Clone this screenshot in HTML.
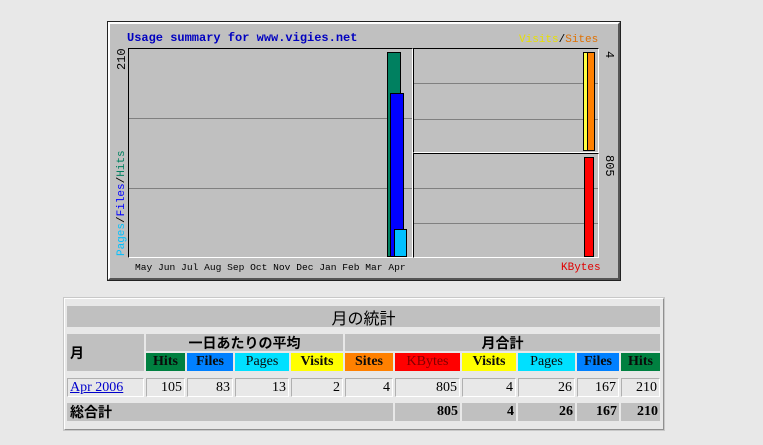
<!DOCTYPE html>
<html><head><meta charset="utf-8"><style>
body{margin:0;width:763px;height:445px;background:#e8e8e8;position:relative;overflow:hidden;font-family:"Liberation Serif","Noto Serif CJK JP",serif}
.a{position:absolute;box-sizing:border-box}
.m{font-family:"Liberation Mono","DejaVu Sans Mono",monospace;font-size:11px}
.c{position:absolute;box-sizing:border-box;font-size:14px;display:flex;align-items:center}
.h{background:#c0c0c0;font-weight:bold}
.d{background:#e8e8e8;border:1px solid #b0b0b0;border-right-color:#fff;border-bottom-color:#fff;justify-content:flex-end;padding-right:2px}
.ch{justify-content:center;font-weight:bold;color:#0a0a0a}
</style></head><body>
<div class="a" style="left:108px;top:22px;width:512px;height:258px;background:#c0c0c0;border:2px solid;border-color:#fff #555 #555 #fff;box-shadow:0 0 0 1px #222"></div>
<div class="a m" style="left:127px;top:31px;color:#0000c0;font-weight:bold;font-size:12px">Usage summary for www.vigies.net</div>
<div class="a m" style="left:519px;top:34px;font-size:11px"><span style="color:#e8e000">Visits</span>/<span style="color:#e07000">Sites</span></div>
<div class="a" style="left:128px;top:48px;width:285px;height:210px;border:1px solid;border-color:#000 #fff #fff #000"></div>
<div class="a" style="left:129px;top:118px;width:283px;height:1px;background:#808080"></div>
<div class="a" style="left:129px;top:188px;width:283px;height:1px;background:#808080"></div>
<div class="a" style="left:387px;top:52px;width:14px;height:205px;background:#008060;border:1px solid #000"></div>
<div class="a" style="left:390px;top:93px;width:14px;height:164px;background:#0000ff;border:1px solid #000"></div>
<div class="a" style="left:394px;top:229px;width:13px;height:28px;background:#00c0ff;border:1px solid #000"></div>
<div class="a" style="left:413px;top:48px;width:186px;height:105px;border:1px solid;border-color:#000 #fff #fff #000"></div>
<div class="a" style="left:413px;top:153px;width:186px;height:105px;border:1px solid;border-color:#000 #fff #fff #000"></div>
<div class="a" style="left:414px;top:83px;width:184px;height:1px;background:#808080"></div>
<div class="a" style="left:414px;top:119px;width:184px;height:1px;background:#808080"></div>
<div class="a" style="left:414px;top:188px;width:184px;height:1px;background:#808080"></div>
<div class="a" style="left:414px;top:223px;width:184px;height:1px;background:#808080"></div>
<div class="a" style="left:583px;top:52px;width:5px;height:99px;background:#ffff40;border:1px solid #000"></div>
<div class="a" style="left:587px;top:52px;width:8px;height:99px;background:#ff8000;border:1px solid #000"></div>
<div class="a" style="left:584px;top:157px;width:10px;height:100px;background:#ff0000;border:1px solid #000"></div>
<div class="a m" style="left:116px;top:70px;transform:rotate(-90deg);transform-origin:0 0;color:#000;font-size:12px;line-height:13px">210</div>
<div class="a m" style="left:116px;top:256px;transform:rotate(-90deg);transform-origin:0 0;white-space:nowrap;font-size:11px;line-height:13px"><span style="color:#00c0ff">Pages</span>/<span style="color:#0000ff">Files</span>/<span style="color:#008060">Hits</span></div>
<div class="a m" style="left:615px;top:51px;transform:rotate(90deg);transform-origin:0 0;font-size:12px;line-height:13px">4</div>
<div class="a m" style="left:615px;top:155px;transform:rotate(90deg);transform-origin:0 0;font-size:12px;line-height:13px">805</div>
<div class="a m" style="left:135px;top:262px;white-space:nowrap;font-size:9.6px">May Jun Jul Aug Sep Oct Nov Dec Jan Feb Mar Apr</div>
<div class="a m" style="left:561px;top:262px;color:#e00000">KBytes</div>
<div class="a" style="left:64px;top:298px;width:600px;height:132px;background:#e8e8e8;border:1px solid;border-color:#fff #909090 #909090 #fff;box-shadow:0 0 0 1px #c8c8c8"></div>
<div class="c h" style="left:67px;top:306px;width:593px;height:21px;justify-content:center;font-weight:normal;font-size:16px;font-family:'Noto Sans CJK JP',sans-serif">月の統計</div>
<div class="c h" style="left:67px;top:334px;width:77px;height:37px;padding-left:3px;font-family:'Noto Sans CJK JP',sans-serif">月</div>
<div class="c h" style="left:146px;top:334px;width:197px;height:17px;justify-content:center;font-family:'Noto Sans CJK JP',sans-serif">一日あたりの平均</div>
<div class="c h" style="left:345px;top:334px;width:315px;height:17px;justify-content:center;font-family:'Noto Sans CJK JP',sans-serif">月合計</div>
<div class="c ch" style="left:146px;top:353px;width:39px;height:18px;background:#008040">Hits</div>
<div class="c ch" style="left:187px;top:353px;width:46px;height:18px;background:#0080ff">Files</div>
<div class="c ch" style="left:235px;top:353px;width:54px;height:18px;background:#00e0ff;font-weight:normal">Pages</div>
<div class="c ch" style="left:291px;top:353px;width:52px;height:18px;background:#ffff00">Visits</div>
<div class="c ch" style="left:345px;top:353px;width:48px;height:18px;background:#ff8000">Sites</div>
<div class="c ch" style="left:395px;top:353px;width:65px;height:18px;background:#ff0000;color:#800000;font-weight:normal">KBytes</div>
<div class="c ch" style="left:462px;top:353px;width:54px;height:18px;background:#ffff00">Visits</div>
<div class="c ch" style="left:518px;top:353px;width:57px;height:18px;background:#00e0ff;font-weight:normal">Pages</div>
<div class="c ch" style="left:577px;top:353px;width:42px;height:18px;background:#0080ff">Files</div>
<div class="c ch" style="left:621px;top:353px;width:39px;height:18px;background:#008040">Hits</div>
<div class="c" style="left:67px;top:378px;width:77px;height:19px;padding-left:2px;border:1px solid #b0b0b0;border-right-color:#fff;border-bottom-color:#fff"><span style="color:#0000cc;text-decoration:underline">Apr 2006</span></div>
<div class="c d" style="left:146px;top:378px;width:39px;height:19px">105</div>
<div class="c d" style="left:187px;top:378px;width:46px;height:19px">83</div>
<div class="c d" style="left:235px;top:378px;width:54px;height:19px">13</div>
<div class="c d" style="left:291px;top:378px;width:52px;height:19px">2</div>
<div class="c d" style="left:345px;top:378px;width:48px;height:19px">4</div>
<div class="c d" style="left:395px;top:378px;width:65px;height:19px">805</div>
<div class="c d" style="left:462px;top:378px;width:54px;height:19px">4</div>
<div class="c d" style="left:518px;top:378px;width:57px;height:19px">26</div>
<div class="c d" style="left:577px;top:378px;width:42px;height:19px">167</div>
<div class="c d" style="left:621px;top:378px;width:39px;height:19px">210</div>
<div class="c h" style="left:67px;top:403px;width:326px;height:18px;padding-left:3px;font-family:'Noto Sans CJK JP',sans-serif">総合計</div>
<div class="c h" style="left:395px;top:403px;width:65px;height:18px;justify-content:flex-end;padding-right:2px">805</div>
<div class="c h" style="left:462px;top:403px;width:54px;height:18px;justify-content:flex-end;padding-right:2px">4</div>
<div class="c h" style="left:518px;top:403px;width:57px;height:18px;justify-content:flex-end;padding-right:2px">26</div>
<div class="c h" style="left:577px;top:403px;width:42px;height:18px;justify-content:flex-end;padding-right:2px">167</div>
<div class="c h" style="left:621px;top:403px;width:39px;height:18px;justify-content:flex-end;padding-right:2px">210</div>
</body></html>
